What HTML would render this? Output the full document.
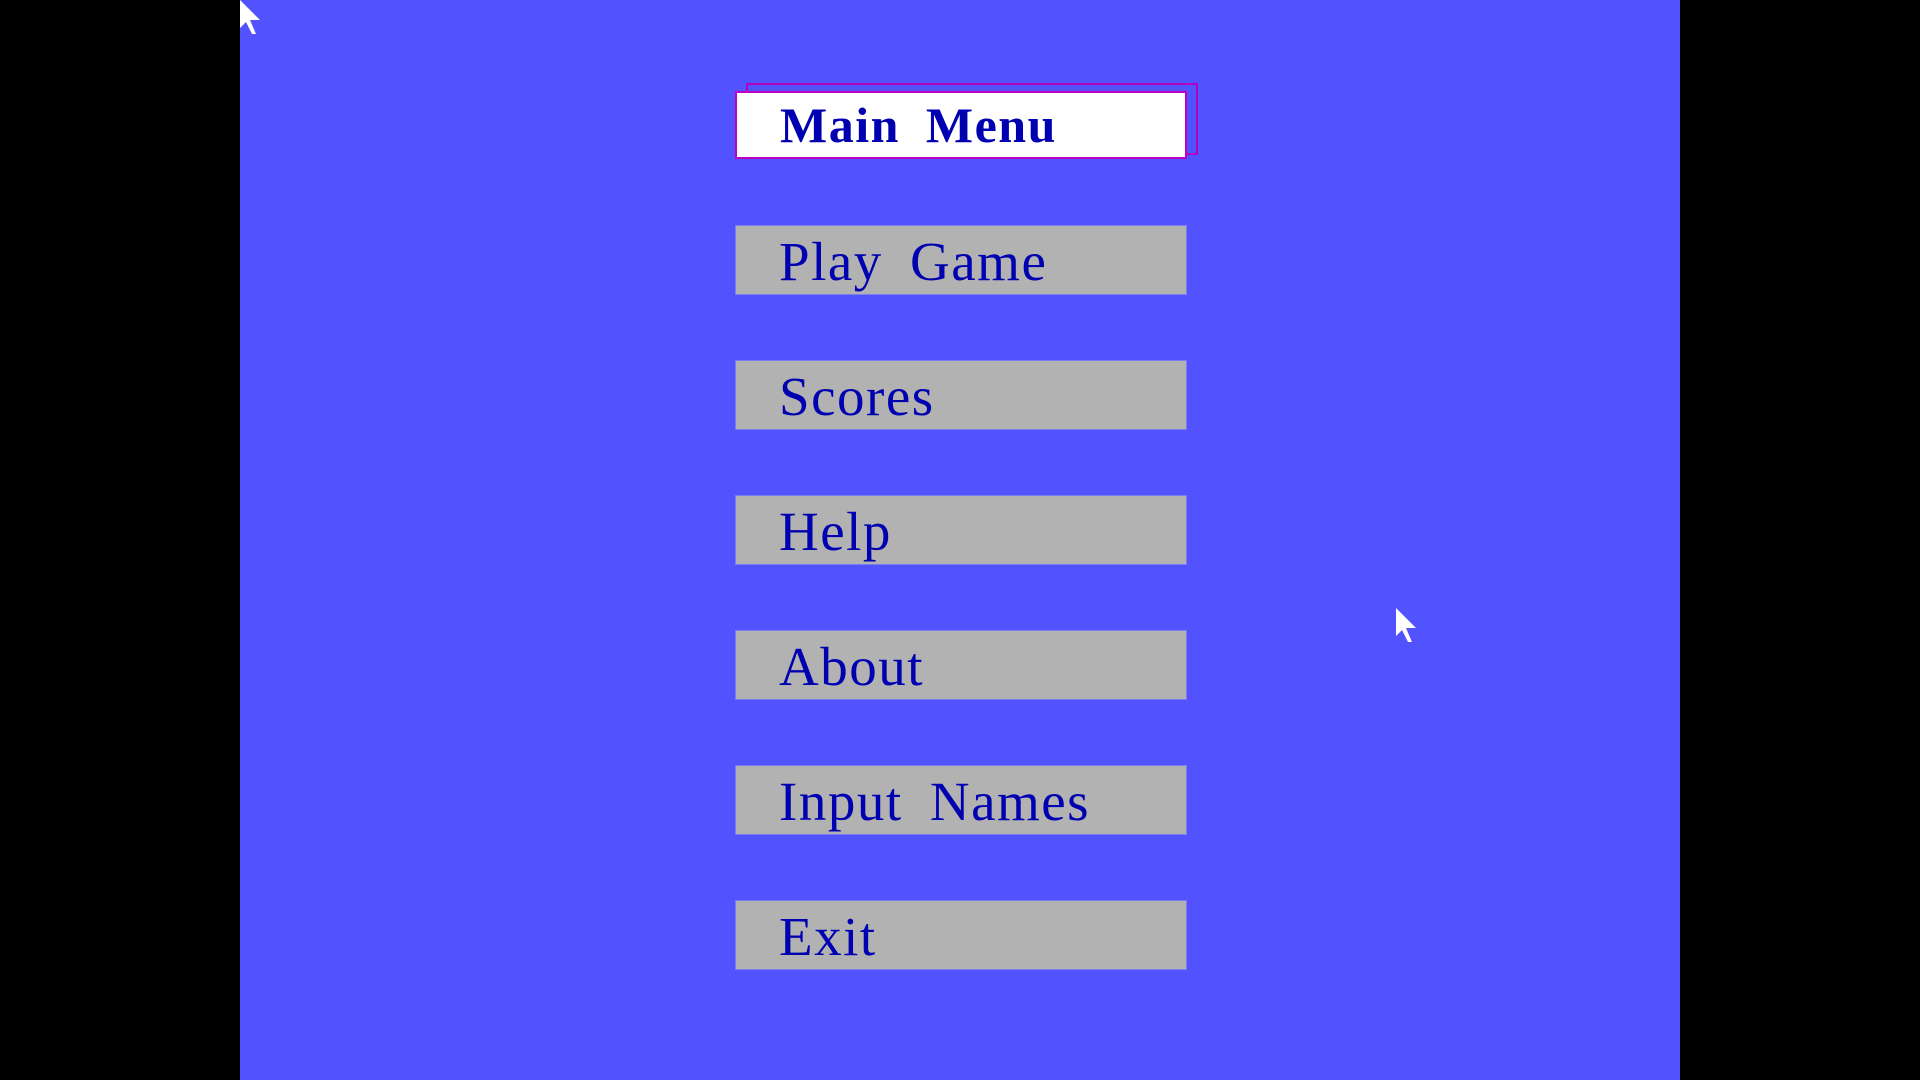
<!DOCTYPE html>
<html><head><style>
body{margin:0;width:1920px;height:1080px;background:#000;position:relative;overflow:hidden;font-family:"Liberation Serif",serif}
#s{position:absolute;left:240px;top:0;width:1440px;height:1080px;background:#5252ff}
.b{position:absolute;left:735px;width:452px;height:70px;background:#b2b2b2;color:#0000b0;font-size:55px;line-height:72px;text-indent:43px;letter-spacing:1.5px;word-spacing:12px;box-sizing:border-box;border:1px solid #7c7cf0}
.m{background:#fff;border:2px solid #c000c0;top:91px;height:68px;line-height:64px;font-weight:bold;font-size:50px}
.bk{position:absolute;left:746px;top:83px;width:452px;height:72px;border:2px solid #b000c0;box-sizing:border-box}
.c{position:absolute}
</style></head><body>
<div id="s"></div>
<div class="bk"></div>
<div class="b m">Main Menu</div>
<div class="b" style="top:225px">Play Game</div>
<div class="b" style="top:360px">Scores</div>
<div class="b" style="top:495px">Help</div>
<div class="b" style="top:630px">About</div>
<div class="b" style="top:765px">Input Names</div>
<div class="b" style="top:900px">Exit</div>
<svg class="c" style="left:240px;top:0" width="22" height="36" viewBox="0 0 11 18"><path d="M0 0V14L3 11L6 17H8L5 10H10Z" fill="#fff"/></svg>
<svg class="c" style="left:1396px;top:608px" width="22" height="36" viewBox="0 0 11 18"><path d="M0 0V14L3 11L6 17H8L5 10H10Z" fill="#fff"/></svg>
</body></html>
